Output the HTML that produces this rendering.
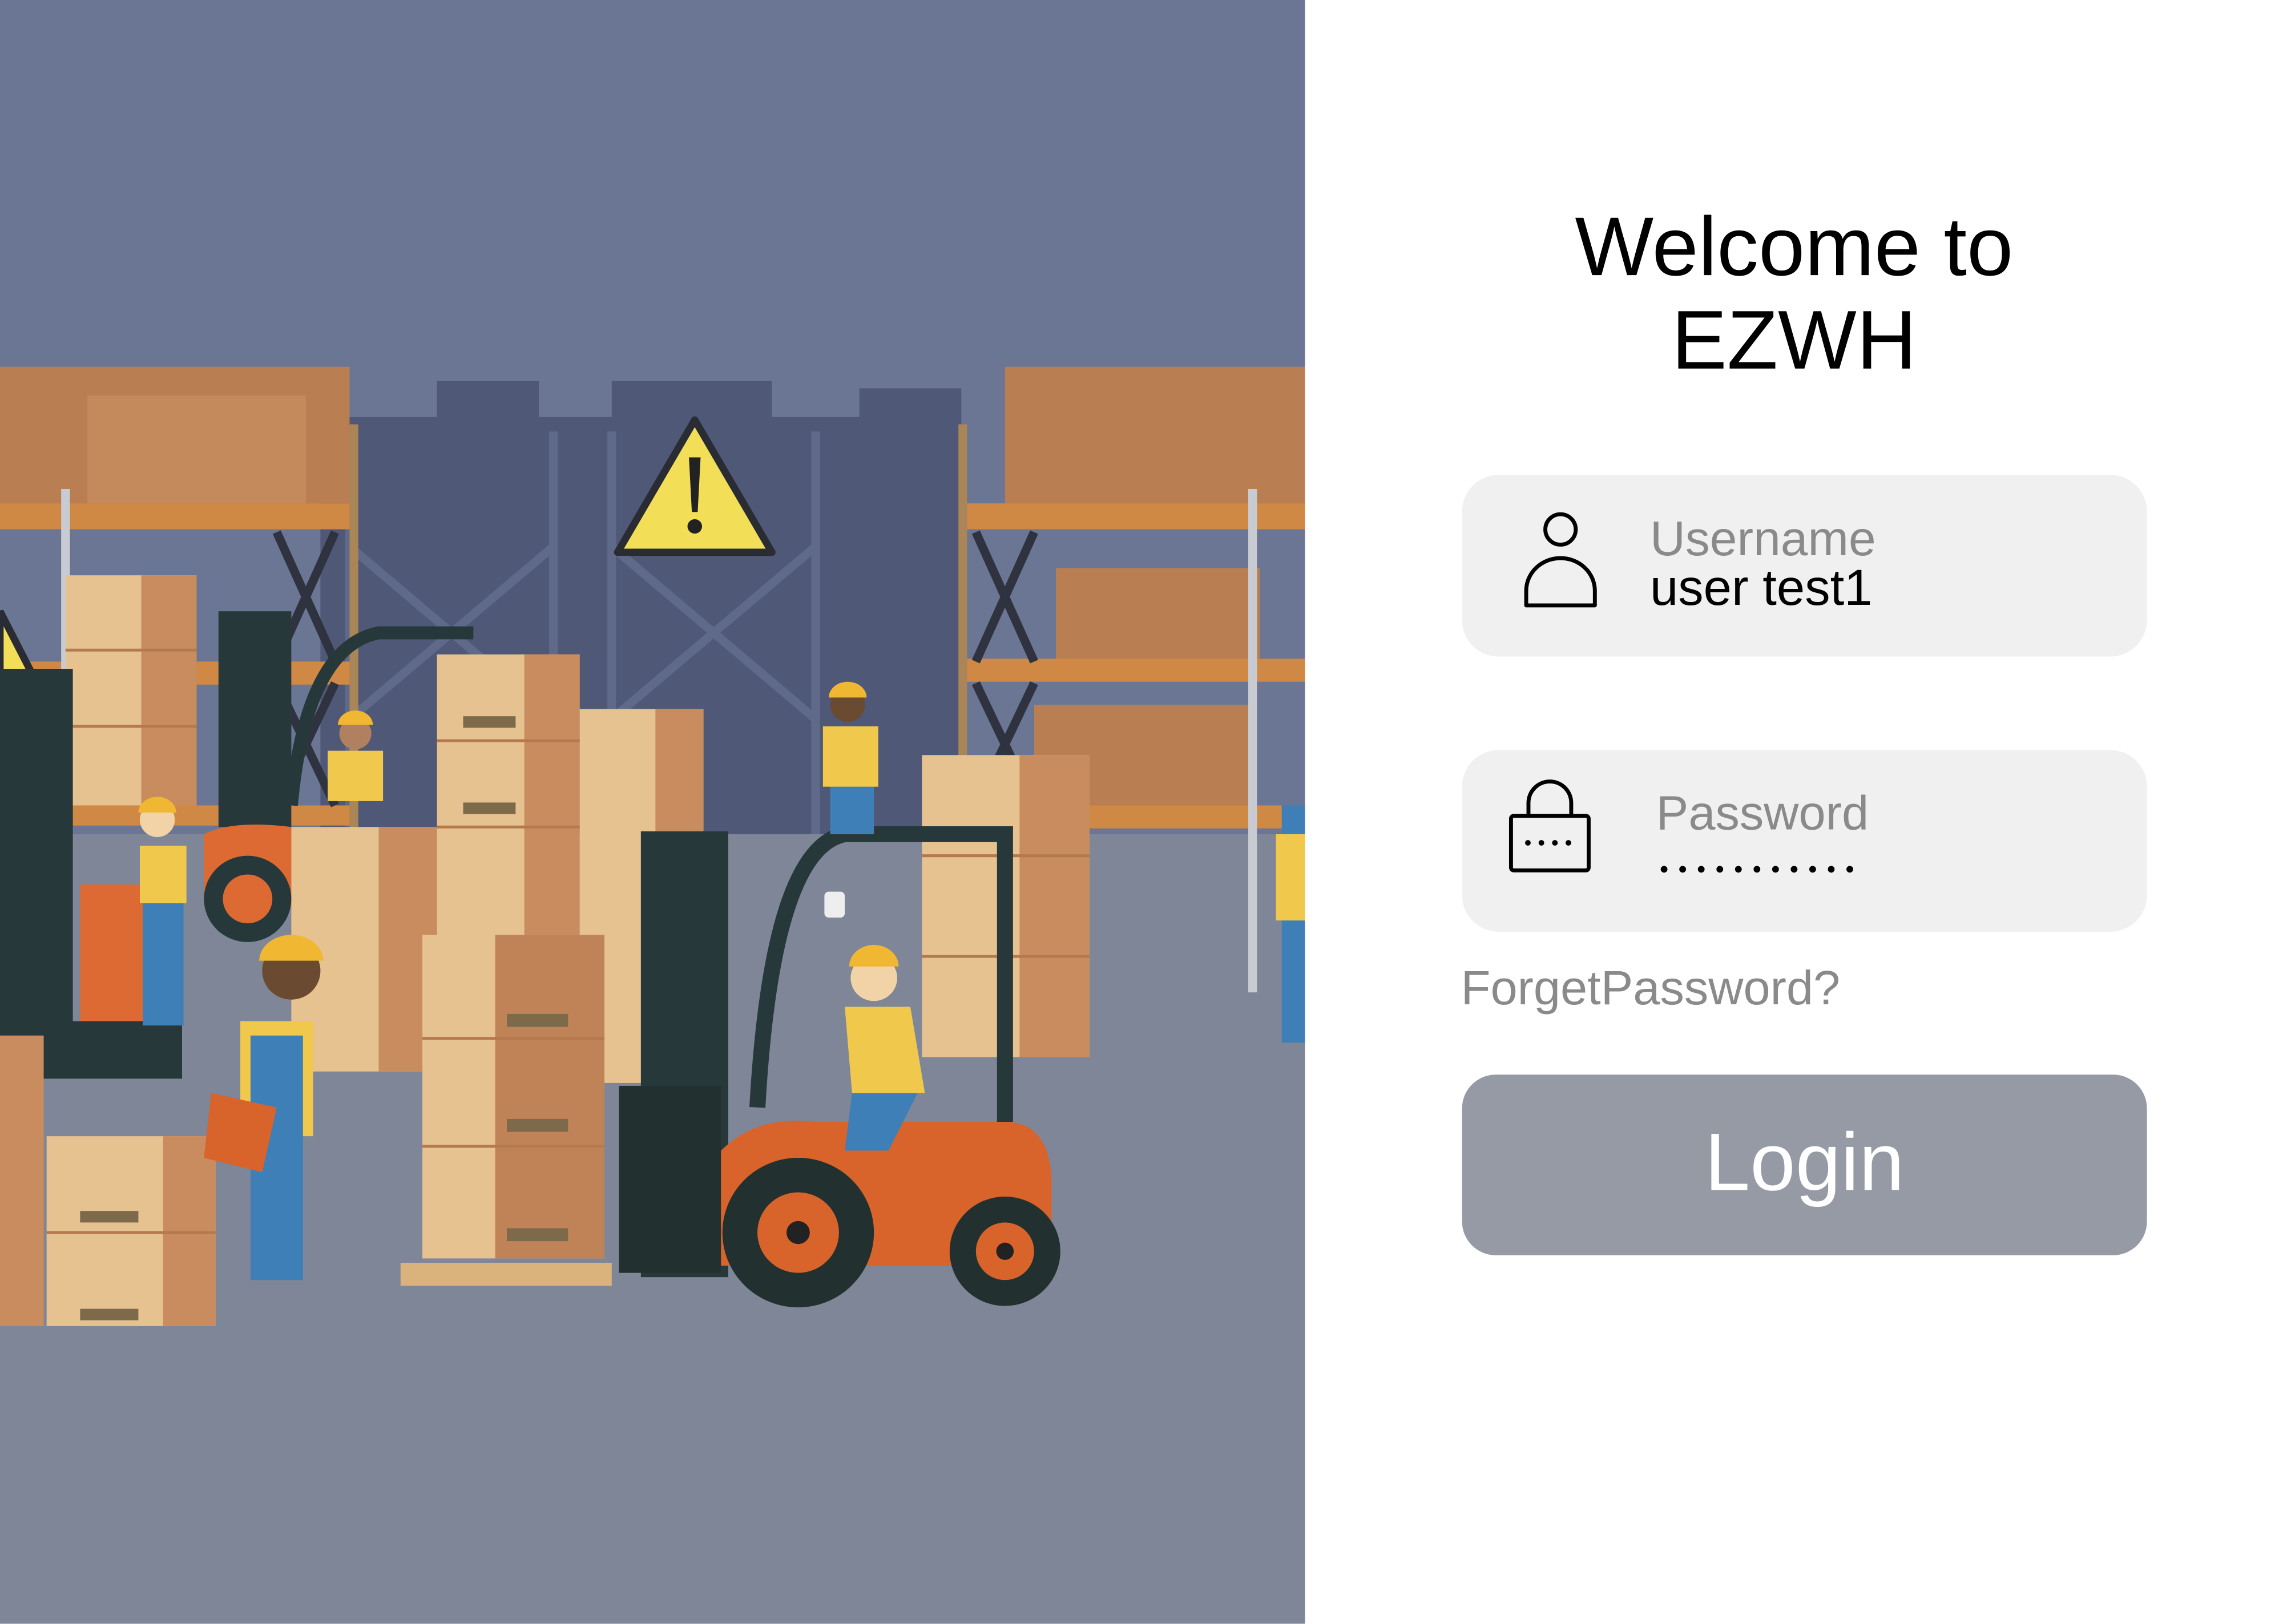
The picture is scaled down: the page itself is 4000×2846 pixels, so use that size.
<!DOCTYPE html>
<html><head><meta charset="utf-8"><style>
*{margin:0;padding:0;box-sizing:border-box}
html,body{width:4000px;height:2845px;background:#fff;overflow:hidden;font-family:"Liberation Sans",sans-serif}
#wrap{position:absolute;left:0;top:0;width:4057px;height:2886px;transform:scale(0.986);transform-origin:0 0}
#left{position:absolute;left:0;top:0;width:2319px;height:2886px}
.t{position:absolute;white-space:nowrap;line-height:1}
.box{position:absolute;left:2598px;width:1217px;height:323px;background:#f0f0f0;border-radius:65px}
</style></head><body><div id="wrap">
<svg id="left" viewBox="0 0 896 1129" preserveAspectRatio="none" xmlns="http://www.w3.org/2000/svg">
<rect width="896" height="1129" fill="#6b7594"/>
<path d="M220 290h80v-25h70v25h50v-25h110v25h60v-20h70v330H220z" fill="#4f5876"/>
<g stroke="#5f6a8a" stroke-width="6" fill="none"><path d="M240 300v290M380 300v290M420 300v290M560 300v290M240 380l140 120M380 380l-140 120M420 380l140 120M560 380l-140 120"/></g>
<rect x="0" y="580" width="896" height="549" fill="#7e8697"/>
<rect x="0" y="255" width="240" height="95" fill="#b97f52"/>
<rect x="60" y="275" width="150" height="75" fill="#c48a5c"/>
<rect x="0" y="350" width="245" height="18" fill="#d08944"/>
<rect x="0" y="460" width="245" height="16" fill="#d08944"/>
<rect x="0" y="560" width="245" height="14" fill="#d08944"/>
<g stroke="#2f3340" stroke-width="6"><path d="M190 370l40 90M230 370l-40 90M190 475l40 85M230 475l-40 85"/></g>
<rect x="42" y="340" width="6" height="250" fill="#c9cbd3"/>
<rect x="240" y="295" width="6" height="290" fill="#a98558"/>
<rect x="690" y="255" width="206" height="95" fill="#b97f52"/>
<rect x="660" y="350" width="236" height="18" fill="#d08944"/>
<rect x="725" y="395" width="140" height="65" fill="#b97f52"/>
<rect x="660" y="458" width="236" height="16" fill="#d08944"/>
<rect x="710" y="490" width="150" height="70" fill="#b97f52"/>
<rect x="660" y="560" width="236" height="16" fill="#d08944"/>
<g stroke="#2f3340" stroke-width="6"><path d="M670 370l40 90M710 370l-40 90M670 475l40 85M710 475l-40 85"/></g>
<rect x="857" y="340" width="6" height="350" fill="#c9cbd3"/>
<rect x="658" y="295" width="6" height="290" fill="#a98558"/>
<path d="M477 292L424 384H530Z" fill="#f2df57" stroke="#2a2c34" stroke-width="5" stroke-linejoin="round"/>
<path d="M473 318h8l-2 38h-4z" fill="#222"/><circle cx="477" cy="366" r="5" fill="#222"/>
<path d="M0 425L38 500H0Z" fill="#f2df57" stroke="#2a2c34" stroke-width="5"/>
<g>
<rect x="45" y="400" width="90" height="160" fill="#e6c290"/><rect x="97" y="400" width="38" height="160" fill="#c88c5f"/>
<rect x="300" y="455" width="98" height="200" fill="#e6c290"/><rect x="360" y="455" width="38" height="200" fill="#c88c5f"/>
<rect x="398" y="493" width="85" height="260" fill="#e6c290"/><rect x="450" y="493" width="33" height="260" fill="#c88c5f"/>
<rect x="200" y="575" width="100" height="170" fill="#e6c290"/><rect x="260" y="575" width="40" height="170" fill="#c88c5f"/>
<rect x="290" y="650" width="125" height="225" fill="#e6c290"/><rect x="340" y="650" width="75" height="225" fill="#c08358"/>
<rect x="633" y="525" width="115" height="210" fill="#e6c290"/><rect x="700" y="525" width="48" height="210" fill="#c88c5f"/>
<rect x="32" y="790" width="116" height="132" fill="#e6c290"/><rect x="112" y="790" width="36" height="132" fill="#c88c5f"/>
<rect x="0" y="570" width="30" height="352" fill="#c88c5f"/>
<g stroke="#b47a4e" stroke-width="2"><path d="M300 515h98M300 575h98M290 722h125M290 797h125M633 595h115M633 665h115M32 857h116M45 452h90M45 505h90"/></g>
<g fill="#7d6a4a"><rect x="318" y="498" width="36" height="8"/><rect x="318" y="558" width="36" height="8"/><rect x="348" y="705" width="42" height="9"/><rect x="348" y="778" width="42" height="9"/><rect x="348" y="854" width="42" height="9"/><rect x="55" y="842" width="40" height="8"/><rect x="55" y="910" width="40" height="8"/></g>
<rect x="275" y="878" width="145" height="16" fill="#d9b37b"/>
</g>
<rect x="0" y="465" width="50" height="255" fill="#27383b"/>
<rect x="55" y="615" width="45" height="100" fill="#dc6a32"/>
<rect x="30" y="710" width="95" height="40" fill="#27383b"/>
<rect x="150" y="425" width="50" height="150" fill="#27383b"/>
<path d="M200 560 Q210 450 260 440 H325" stroke="#27383b" stroke-width="9" fill="none"/>
<path d="M140 580 Q160 570 200 575 V630 H140Z" fill="#dc6a32"/>
<circle cx="170" cy="625" r="30" fill="#27383b"/><circle cx="170" cy="625" r="17" fill="#dc6a32"/>
<rect x="440" y="578" width="60" height="310" fill="#27383b"/>
<rect x="425" y="755" width="70" height="130" fill="#22302f"/>
<path d="M520 770 Q530 590 580 580 H690 V780" stroke="#27383b" stroke-width="11" fill="none"/>
<rect x="566" y="620" width="14" height="18" rx="3" fill="#eee"/>
<path d="M495 800 Q520 775 560 780 H690 Q720 780 722 820 V880 H495Z" fill="#d8632b"/>
<circle cx="548" cy="857" r="52" fill="#22302f"/><circle cx="548" cy="857" r="28" fill="#d8632b"/><circle cx="548" cy="857" r="8" fill="#222"/>
<circle cx="690" cy="870" r="38" fill="#22302f"/><circle cx="690" cy="870" r="20" fill="#d8632b"/><circle cx="690" cy="870" r="6" fill="#222"/>
<g>
<circle cx="600" cy="680" r="16" fill="#f2d3a8"/><path d="M583 672a17 15 0 0 1 34 0z" fill="#efb732"/>
<path d="M580 700h45l10 60h-50z" fill="#f0c84c"/><path d="M585 760h45l-20 40h-30z" fill="#3f7fb8"/>
<circle cx="200" cy="675" r="20" fill="#6b4a32"/><path d="M178 668a22 18 0 0 1 44 0z" fill="#efb732"/>
<path d="M165 710h50v80h-50z" fill="#f0c84c"/><path d="M172 720h36v170h-36z" fill="#3f7fb8"/>
<path d="M145 760l45 10-10 45-40-10z" fill="#d8632b"/>
<circle cx="108" cy="570" r="12" fill="#f2d3a8"/><path d="M95 565a13 11 0 0 1 26 0z" fill="#efb732"/><rect x="98" y="588" width="28" height="125" fill="#3f7fb8"/><rect x="96" y="588" width="32" height="40" fill="#f0c84c"/>
<circle cx="582" cy="490" r="12" fill="#6b4a32"/><path d="M569 485a13 11 0 0 1 26 0z" fill="#efb732"/><rect x="570" y="505" width="30" height="75" fill="#3f7fb8"/><rect x="565" y="505" width="38" height="42" fill="#f0c84c"/>
<circle cx="244" cy="510" r="11" fill="#b08060"/><path d="M232 504a12 10 0 0 1 24 0z" fill="#efb732"/><rect x="225" y="522" width="38" height="35" fill="#f0c84c"/>
<rect x="880" y="560" width="16" height="165" fill="#3f7fb8"/><rect x="876" y="580" width="20" height="60" fill="#f0c84c"/>
</g>
</svg>

<div class="t" style="left:2688px;width:1000px;top:365px;text-align:center;font-size:148px;color:#000">Welcome to</div>
<div class="t" style="left:2688px;width:1000px;top:531px;text-align:center;font-size:148px;color:#000">EZWH</div>

<div class="box" style="top:844px"></div>
<svg style="position:absolute;left:2706px;top:910px" width="134" height="172" viewBox="0 0 134 172"><circle cx="67" cy="31" r="27" fill="none" stroke="#000" stroke-width="7"/><path d="M6 166V140A61 58 0 0 1 128 140V166Z" fill="none" stroke="#000" stroke-width="7" stroke-linejoin="round"/></svg>
<div class="t" style="left:2932px;top:914px;font-size:87px;color:#8a8a8a">Username</div>
<div class="t" style="left:2932px;top:1000px;font-size:90px;color:#000">user test1</div>

<div class="box" style="top:1333px"></div>
<svg style="position:absolute;left:2681px;top:1382px" width="146" height="170" viewBox="0 0 146 170"><path d="M35 68V45A38 38 0 0 1 111 45V68" fill="none" stroke="#000" stroke-width="7"/><rect x="4" y="68" width="138" height="97" rx="5" fill="none" stroke="#000" stroke-width="7"/><g fill="#000"><circle cx="34" cy="116" r="5"/><circle cx="58" cy="116" r="5"/><circle cx="82" cy="116" r="5"/><circle cx="106" cy="116" r="5"/></g></svg>
<div class="t" style="left:2943px;top:1402px;font-size:86px;color:#8a8a8a">Password</div>
<svg style="position:absolute;left:2950px;top:1535px" width="360" height="20"><g fill="#000"><circle cx="7" cy="10" r="6"/><circle cx="40" cy="10" r="6"/><circle cx="73" cy="10" r="6"/><circle cx="106" cy="10" r="6"/><circle cx="139" cy="10" r="6"/><circle cx="172" cy="10" r="6"/><circle cx="205" cy="10" r="6"/><circle cx="238" cy="10" r="6"/><circle cx="271" cy="10" r="6"/><circle cx="304" cy="10" r="6"/><circle cx="337" cy="10" r="6"/></g></svg>

<div class="t" style="left:2596px;top:1713px;font-size:86px;color:#8a8a8a">ForgetPassword?</div>

<div style="position:absolute;left:2598px;top:1910px;width:1217px;height:321px;background:#959aa5;border-radius:60px"></div>
<div class="t" style="left:2598px;width:1217px;top:1993px;text-align:center;font-size:145px;color:#fff">Login</div>
</div></body></html>
